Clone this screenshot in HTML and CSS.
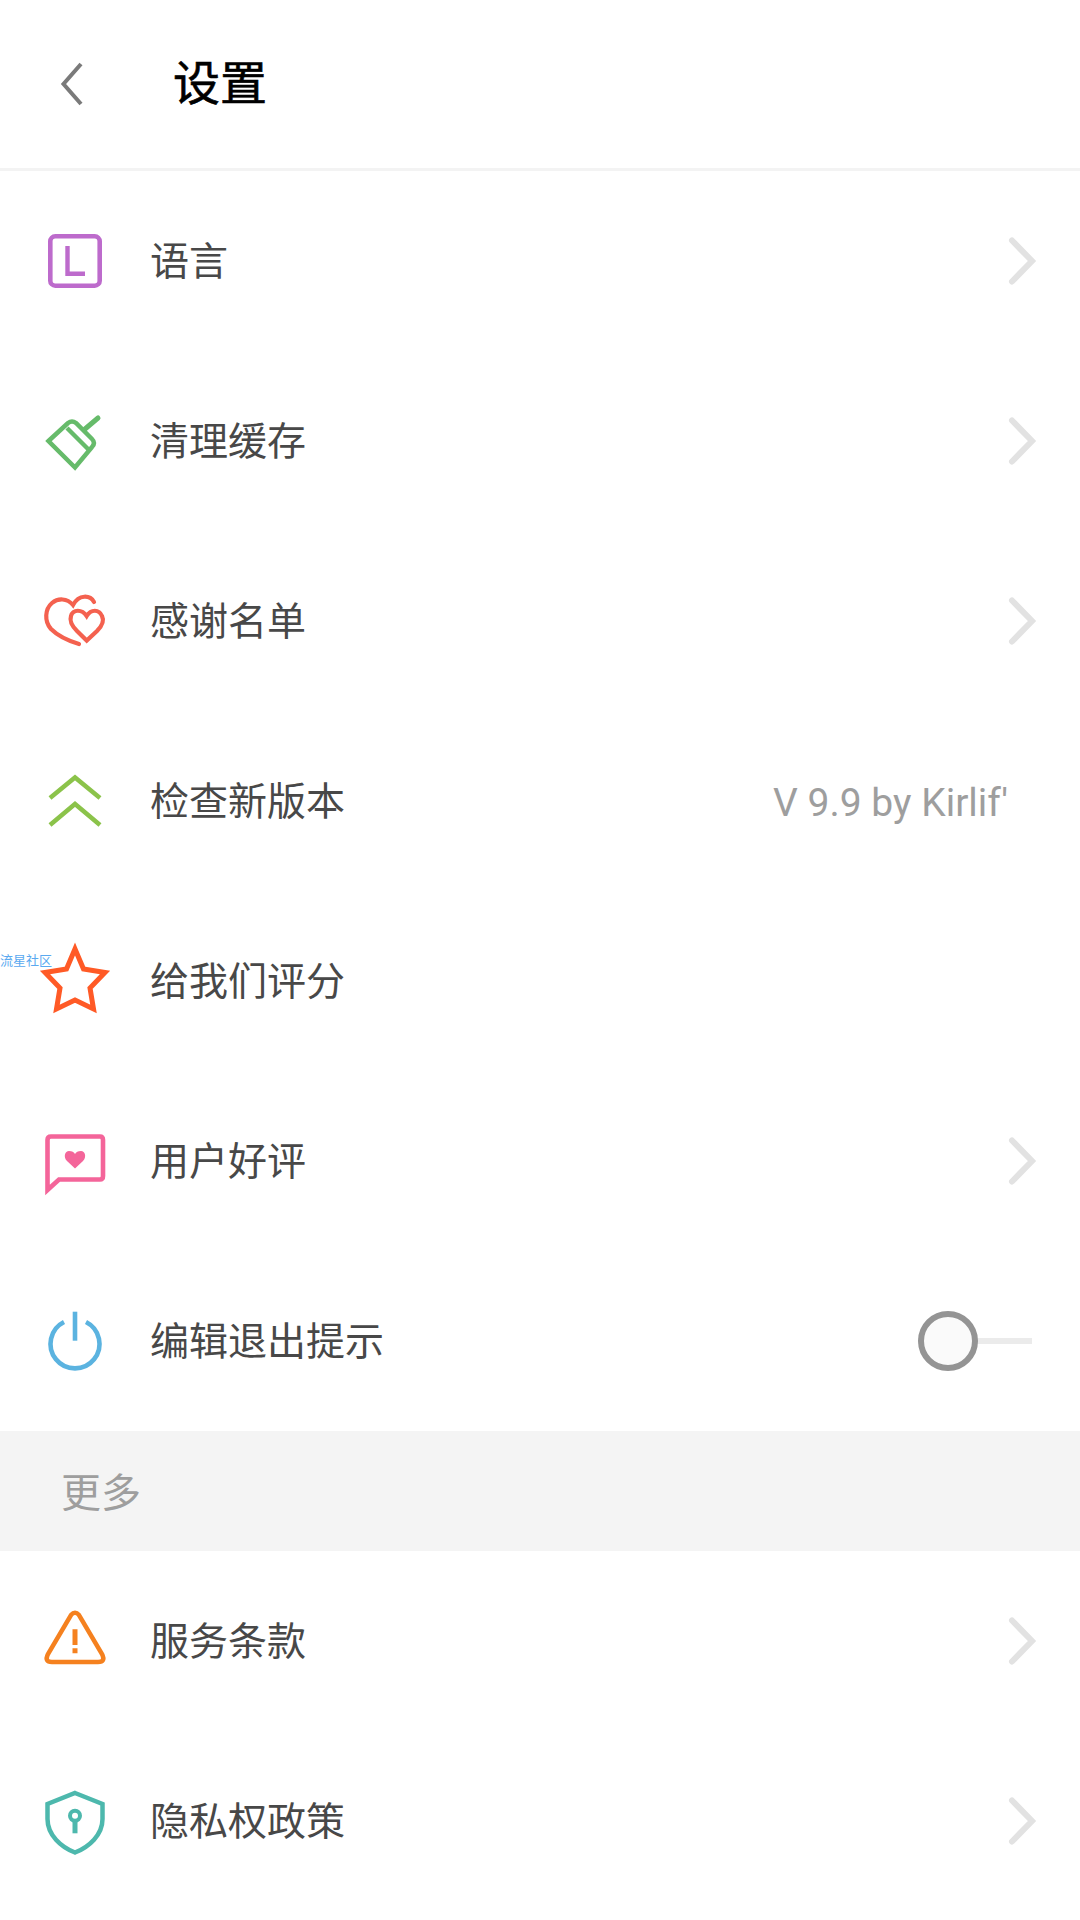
FILE: index.html
```html
<!DOCTYPE html>
<html>
<head>
<meta charset="utf-8">
<title>设置</title>
<link rel="stylesheet" href="styles.css">
</head>
<body>
<div class="topbar">
	<svg class="back" width="30" height="50" viewBox="0 0 30 50"><path d="M24 5 L6.5 25 L24 45" fill="none" stroke="#7a7a7a" stroke-width="4"/></svg>
	<span class="title">设置</span>
</div>
<div class="row">
	<svg class="icon" width="64" height="64" viewBox="0 0 64 64"><rect x="7.3" y="7.3" width="49.4" height="49.4" rx="5" fill="none" stroke="#bd6bcc" stroke-width="4.6"/><path d="M24.5 17 V44.8 H42" fill="none" stroke="#bd6bcc" stroke-width="4.4"/></svg>
	<span class="label">语言</span>
	<svg class="arrow" width="30" height="50" viewBox="0 0 30 50"><path d="M4 4.5 L24 25 L4 45.5" fill="none" stroke="#e2e2e2" stroke-width="6" stroke-linecap="round"/></svg>
</div>
<div class="row">
	<svg class="icon" width="64" height="64" viewBox="0 0 64 64"><path d="M5.5 32 L25 14 Q29 11 33 14 L49 30 Q53 34 49 38 L32 58.5 Z" fill="none" stroke="#66bb6a" stroke-width="4.5"/><path d="M24 19 L46 41" fill="none" stroke="#66bb6a" stroke-width="4.5"/><path d="M42 20 L55 9" fill="none" stroke="#66bb6a" stroke-width="5" stroke-linecap="round"/></svg>
	<span class="label">清理缓存</span>
	<svg class="arrow" width="30" height="50" viewBox="0 0 30 50"><path d="M4 4.5 L24 25 L4 45.5" fill="none" stroke="#e2e2e2" stroke-width="6" stroke-linecap="round"/></svg>
</div>
<div class="row">
	<svg class="icon" width="64" height="64" viewBox="0 0 64 64"><path d="M51 13 C47 6 36 5 30 16 C24 9 15 9 9 14 C2 20 1 32 8 40 C16 48 26 52 36 55" fill="none" stroke="#f4614f" stroke-width="4.2" stroke-linecap="round"/><path d="M43.7 27 C39 20 30 20 28 27 C26 33 30 38 34 42 L43.7 51.5 L54 42 C58 38 62 33 59 27 C56 20 48 20 43.7 27 Z" fill="none" stroke="#f4614f" stroke-width="4.2"/></svg>
	<span class="label">感谢名单</span>
	<svg class="arrow" width="30" height="50" viewBox="0 0 30 50"><path d="M4 4.5 L24 25 L4 45.5" fill="none" stroke="#e2e2e2" stroke-width="6" stroke-linecap="round"/></svg>
</div>
<div class="row">
	<svg class="icon" width="64" height="64" viewBox="0 0 64 64"><path d="M7 29 L32 8.5 L57 29 M7 56 L32 35 L57 56" fill="none" stroke="#8bc34a" stroke-width="4.5"/></svg>
	<span class="label">检查新版本</span>
	<span class="value">V 9.9 by Kirlif'</span>
</div>
<div class="row">
	<svg class="icon" width="64" height="64" viewBox="0 0 64 64"><path d="M32 0 L40.5 20 L62 23.5 L47 39 L50.5 60 L32 51 L13.5 60 L17 39 L2 23.5 L23.5 20 Z" fill="none" stroke="#ff5a26" stroke-width="5"/></svg>
	<span class="label">给我们评分</span>
	<span class="badge">流星社区</span>
</div>
<div class="row">
	<svg class="icon" width="64" height="64" viewBox="0 0 64 64"><path d="M4.5 11 Q4.5 7.5 8 7.5 H57 Q60 7.5 60 11 V47 Q60 50.5 57 50.5 H16 L4.5 61 Z" fill="none" stroke="#f4659a" stroke-width="4.6"/><path d="M32 39.5 L24 32 C20 28 22 22 26 22 C29 22 31 23 32 25 C33 23 35 22 38 22 C42 22 44 28 40 32 Z" fill="#f4659a"/></svg>
	<span class="label">用户好评</span>
	<svg class="arrow" width="30" height="50" viewBox="0 0 30 50"><path d="M4 4.5 L24 25 L4 45.5" fill="none" stroke="#e2e2e2" stroke-width="6" stroke-linecap="round"/></svg>
</div>
<div class="row">
	<svg class="icon" width="64" height="64" viewBox="0 0 64 64"><path d="M21 13 A24.5 24.5 0 1 0 43 13" fill="none" stroke="#5bb3e0" stroke-width="4.6"/><path d="M32 2.7 V31.7" fill="none" stroke="#5bb3e0" stroke-width="4.6"/></svg>
	<span class="label">编辑退出提示</span>
	<div class="switch"><span class="knob"></span></div>
</div>
<div class="section"><span class="section-label">更多</span></div>
<div class="row">
	<svg class="icon" width="64" height="64" viewBox="0 0 64 64"><path d="M28 6 Q32 1.5 36 6 L59 45 Q63 53 55 53 H9 Q1 53 5 45 Z" fill="none" stroke="#f5811f" stroke-width="4.5"/><path d="M32 20.3 V36 M32 39.3 V44.3" fill="none" stroke="#f5811f" stroke-width="5"/></svg>
	<span class="label">服务条款</span>
	<svg class="arrow" width="30" height="50" viewBox="0 0 30 50"><path d="M4 4.5 L24 25 L4 45.5" fill="none" stroke="#e2e2e2" stroke-width="6" stroke-linecap="round"/></svg>
</div>
<div class="row">
	<svg class="icon shield" width="64" height="68" viewBox="0 0 64 68"><path d="M32 4 L59.5 15 V30 C59.5 46 46 58 32 63.5 C18 58 4.5 46 4.5 30 V15 Z" fill="none" stroke="#4db8ad" stroke-width="4.5"/><circle cx="32" cy="26.7" r="5" fill="none" stroke="#4db8ad" stroke-width="4"/><path d="M32 31.5 V44.3" fill="none" stroke="#4db8ad" stroke-width="5"/></svg>
	<span class="label">隐私权政策</span>
	<svg class="arrow" width="30" height="50" viewBox="0 0 30 50"><path d="M4 4.5 L24 25 L4 45.5" fill="none" stroke="#e2e2e2" stroke-width="6" stroke-linecap="round"/></svg>
</div>
</body>
</html>
```
FILE: styles.css
```css
body {
	margin: 0;
	background: #fff;
	font-family: "Roboto", "Noto Sans CJK SC", sans-serif;
}
.topbar {
	height: 168px;
	display: flex;
	align-items: center;
	padding-left: 57px;
	border-bottom: 3px solid #f3f3f3;
}
.title {
	margin-left: 86px;
	padding-bottom: 9px;
	font-size: 47px;
	color: #000;
	-webkit-text-stroke: 0.6px #000;
}
.row {
	position: relative;
	height: 180px;
	display: flex;
	align-items: center;
	padding: 0 42px 0 43px;
}
.icon {
	flex: none;
	overflow: visible;
}
.shield {
	margin-bottom: -4px;
}
.label {
	margin-left: 43px;
	padding-bottom: 7px;
	flex: 1;
	font-size: 39px;
	color: #484848;
}
.value {
	margin-right: 30px;
	padding-top: 4px;
	font-size: 39px;
	color: #9e9e9e;
}
.badge {
	position: absolute;
	left: 0;
	top: 59px;
	font-size: 13px;
	color: #5aa9f0;
}
.switch {
	position: relative;
	width: 114px;
	height: 6px;
	margin-right: 6px;
	background: #ebebeb;
}
.knob {
	position: absolute;
	left: 0;
	top: -27px;
	width: 48px;
	height: 48px;
	background: #fafafa;
	border: 6px solid #949494;
	border-radius: 50%;
}
.section {
	height: 120px;
	display: flex;
	align-items: center;
	padding-left: 61px;
	background: #f4f4f4;
	font-size: 40px;
	color: #9e9e9e;
}
.section-label {
	padding-bottom: 3px;
}
```
